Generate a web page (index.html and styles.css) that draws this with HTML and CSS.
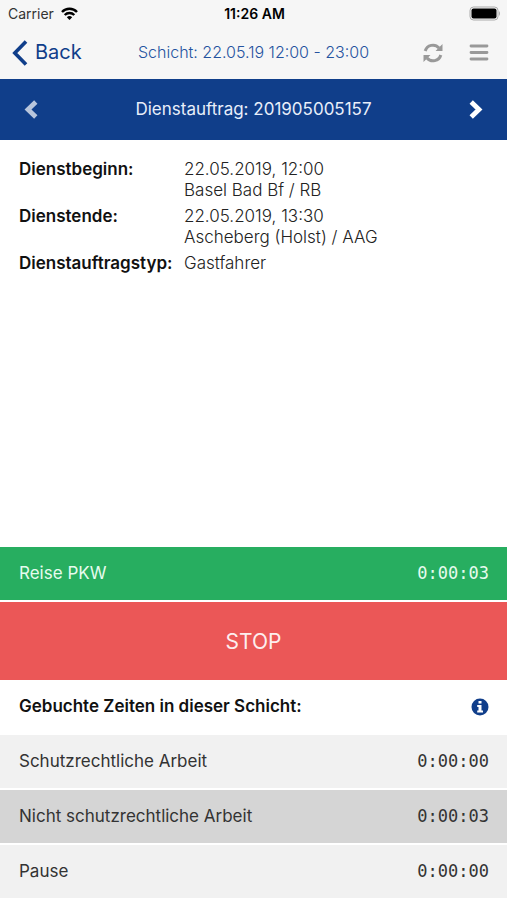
FILE: index.html
```
<!DOCTYPE html>
<html lang="de">
<head>
    <meta charset="UTF-8">
    <meta name="viewport" content="width=device-width, initial-scale=1.0">
    <title>Dienstauftrag</title>
    <link rel="stylesheet" href="styles.css">
</head>
<body>
    <header>
        <div class="status">
            <span class="carrier">Carrier
                <svg width="17" height="13" viewBox="0 0 17 13" fill="none" stroke="#000" stroke-width="2.400">
                    <path d="M1 5C5 .6 12 .6 16 5M3.700 8C6.400 5.300 10.600 5.300 13.300 8"/>
                    <path d="M8.500 13L5.800 10.200Q8.500 8 11.200 10.200Z" fill="#000" stroke="none"/>
                </svg>
            </span>
            <span class="clock">11:26 AM</span>
            <svg class="battery" width="32" height="15" viewBox="0 0 32 15">
                <rect x="1" y="1" width="28" height="13" rx="3.500" fill="none" stroke="#aaa"/>
                <rect x="2.500" y="2.500" width="25" height="10" rx="2" fill="#000"/>
                <path d="M30 5Q32 7.500 30 10Z" fill="#aaa"/>
            </svg>
        </div>
        <div class="nav">
            <a class="back" href="#">
                <svg width="16" height="26" viewBox="0 0 16 26" fill="none" stroke="#103e8a" stroke-width="3.600"><path d="M14 1.500L2.800 13L14 24.500"/></svg>
                Back
            </a>
            <span class="shift">Schicht: 22.05.19 12:00 - 23:00</span>
            <div class="tools">
                <button aria-label="Aktualisieren">
                    <svg width="20" height="20" viewBox="0 0 20 20" fill="none" stroke="#999" stroke-width="3">
                        <path d="M2.200 8A8 8 0 0 1 16 5M17.800 12A8 8 0 0 1 4 15"/>
                        <path d="M19.500 1V8H12.500ZM.5 19V12H7.500Z" fill="#999" stroke="none"/>
                    </svg>
                </button>
                <button aria-label="Menü">
                    <svg width="20" height="18" viewBox="0 0 20 18" stroke="#999" stroke-width="2.800" stroke-linecap="round"><path d="M2 2H18M2 8.500H18M2 15H18"/></svg>
                </button>
            </div>
        </div>
    </header>

    <div class="order">
        <button class="prev" aria-label="Vorheriger Dienstauftrag">
            <svg width="14" height="20" viewBox="0 0 14 20" fill="none" stroke="#fff" stroke-width="4.800"><path d="M11.800 2L4 9.500L11.800 17"/></svg>
        </button>
        <h1>Dienstauftrag: 201905005157</h1>
        <button aria-label="Nächster Dienstauftrag">
            <svg width="14" height="20" viewBox="0 0 14 20" fill="none" stroke="#fff" stroke-width="4.800"><path d="M2.200 2L10 9.500L2.200 17"/></svg>
        </button>
    </div>

    <main>
        <dl class="details">
            <dt>Dienstbeginn:</dt>
            <dd>22.05.2019, 12:00<br>Basel Bad Bf / RB</dd>
            <dt>Dienstende:</dt>
            <dd>22.05.2019, 13:30<br>Ascheberg (Holst) / AAG</dd>
            <dt>Dienstauftragstyp:</dt>
            <dd>Gastfahrer</dd>
        </dl>
    </main>

    <section>
        <div class="row running">
            <span>Reise PKW</span>
            <span class="time">0:00:03</span>
        </div>
        <button class="stop">STOP</button>
        <div class="row title">
            <h2>Gebuchte Zeiten in dieser Schicht:</h2>
            <button aria-label="Info">
                <svg width="18" height="18" viewBox="0 0 18 18">
                    <circle cx="9" cy="9" r="8.500" fill="#103e8a"/>
                    <path d="M7.500 3H10.500V5.500H7.500ZM6.200 7H10.500V12.500H12V14.500H6.200V12.500H7.500V9H6.200Z" fill="#fff"/>
                </svg>
            </button>
        </div>
        <div class="row">
            <span>Schutzrechtliche Arbeit</span>
            <span class="time">0:00:00</span>
        </div>
        <div class="row active">
            <span>Nicht schutzrechtliche Arbeit</span>
            <span class="time">0:00:03</span>
        </div>
        <div class="row">
            <span>Pause</span>
            <span class="time">0:00:00</span>
        </div>
    </section>
</body>
</html>
```
FILE: styles.css
```
* {
    box-sizing: border-box;
}
body {
    margin: 0;
    min-height: 100vh;
    display: flex;
    flex-direction: column;
    font-family: Inter, "Liberation Sans", sans-serif;
    font-size: 17px;
    line-height: 21px;
    color: #333;
    background: #fff;
}
h1, h2, dl, dd {
    margin: 0;
}
button {
    display: flex;
    padding: 0;
    border: none;
    background: none;
    font-family: inherit;
    cursor: pointer;
}
svg {
    display: block;
}
header {
    background: #f6f6f6;
}
.status {
    display: grid;
    grid-template-columns: 1fr auto 1fr;
    align-items: center;
    height: 26px;
    padding: 0 6px 0 8px;
    font-size: 14px;
}
.carrier {
    display: flex;
    align-items: center;
    gap: 7px;
}
.clock {
    color: #000;
    font-weight: 600;
}
.battery {
    justify-self: end;
}
.nav {
    display: grid;
    grid-template-columns: 1fr auto 1fr;
    align-items: center;
    height: 53px;
    padding: 0 12px;
}
.back {
    display: flex;
    align-items: center;
    gap: 7px;
    color: #103e8a;
    font-size: 20px;
    text-decoration: none;
}
.shift {
    color: #2553a0;
    font-size: 16px;
    font-weight: 300;
}
.tools {
    display: flex;
    align-items: center;
    justify-content: flex-end;
    gap: 26px;
    padding-right: 6px;
}
.order {
    display: flex;
    align-items: center;
    justify-content: space-between;
    height: 61px;
    padding: 0 24px;
    background: #103e8a;
}
.order h1 {
    color: #e8eefa;
    font-size: 17px;
    font-weight: 400;
}
.prev {
    opacity: 0.7;
}
main {
    flex: 1;
    padding: 19px;
}
.details {
    display: grid;
    grid-template-columns: 159px 1fr;
    column-gap: 6px;
    row-gap: 5px;
}
.details dt {
    color: #111;
    font-weight: 600;
}
.details dd {
    color: #222;
    font-weight: 300;
}
.row {
    display: flex;
    align-items: center;
    justify-content: space-between;
    height: 55px;
    padding: 0 18px 0 19px;
    background: #f1f1f1;
    border-bottom: 2px solid #fff;
}
.active {
    background: #d5d5d5;
}
.running {
    background: #27ae60;
    color: #e6fbee;
}
.time {
    font-family: "DejaVu Sans Mono", monospace;
    font-size: 17px;
}
.stop {
    width: 100%;
    height: 78px;
    align-items: center;
    justify-content: center;
    background: #eb5757;
    color: #fdeeee;
    font-size: 21px;
}
.title {
    background: #fff;
}
.title h2 {
    color: #111;
    font-size: 17px;
    font-weight: 600;
}
```
